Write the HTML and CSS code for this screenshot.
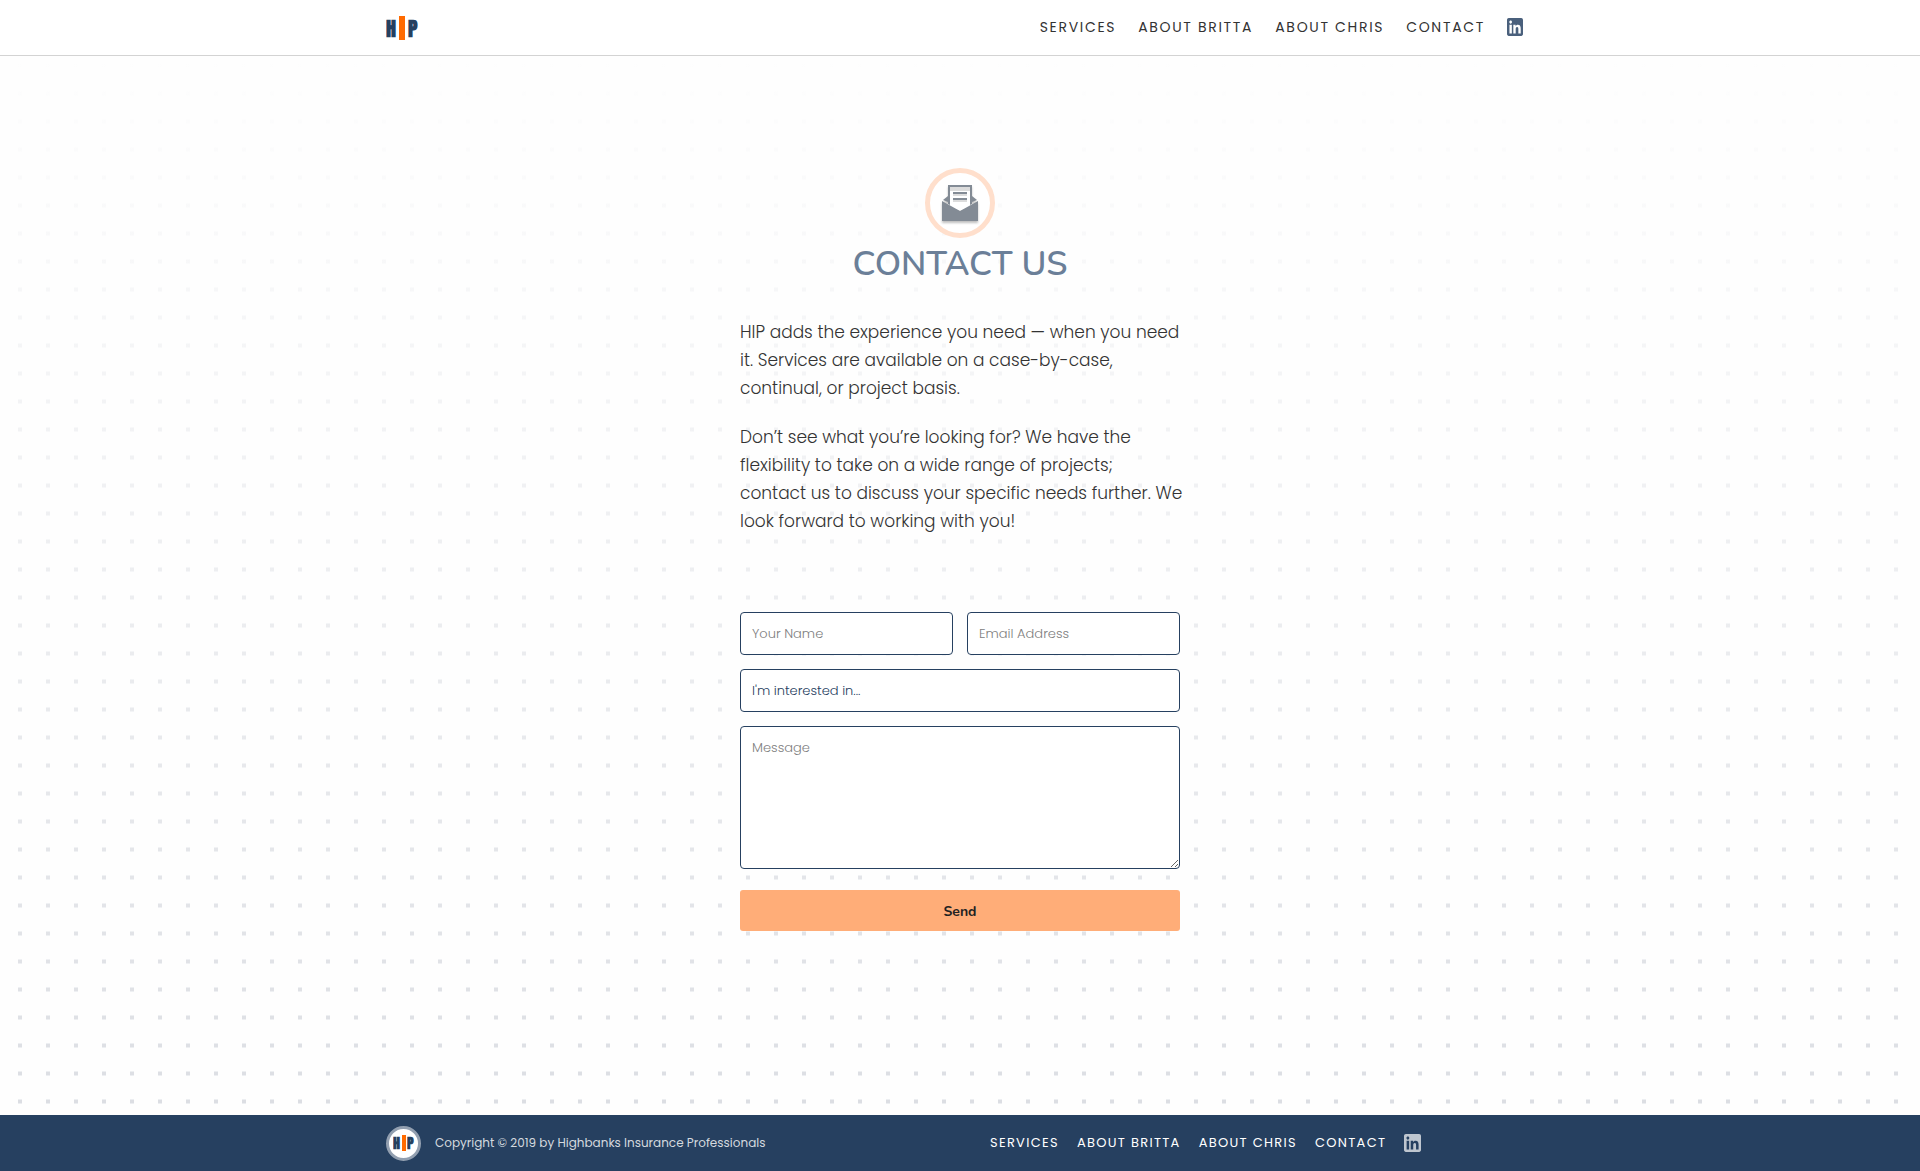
FILE: index.html
```html
<!DOCTYPE html>
<html lang="en">
<head>
<meta charset="utf-8">
<meta name="viewport" content="width=device-width, initial-scale=1">
<title>Contact Us | Highbanks Insurance Professionals</title>
<link rel="stylesheet" href="styles.css">
</head>
<body>
<header class="site-header">
  <div class="container header-inner">
    <a class="logo" href="#" aria-label="Home">
      <svg width="36" height="42" viewBox="0 -8 36 42">
        <text class="logo-letter" x="0" y="22">H</text>
        <rect x="13" y="1" width="6" height="24" fill="#ff6a00"/>
        <text class="logo-letter" x="22" y="22">P</text>
      </svg>
    </a>
    <nav class="nav header-nav">
      <a href="#">Services</a>
      <a href="#">About Britta</a>
      <a href="#">About Chris</a>
      <a href="#">Contact</a>
      <a class="linkedin" href="#" aria-label="LinkedIn">
        <svg width="16" height="18" viewBox="0 32 448 448" preserveAspectRatio="none"><path fill="currentColor" d="M400 32H48C21.500 32 0 53.500 0 80v352c0 26.500 21.500 48 48 48h352c26.500 0 48-21.500 48-48V80c0-26.500-21.500-48-48-48zM135.400 416H69V202.200h66.500V416zm-33.200-243c-21.300 0-38.500-17.300-38.500-38.500S80.900 96 102.200 96c21.200 0 38.500 17.300 38.500 38.500 0 21.300-17.200 38.500-38.500 38.500zm282.100 243h-66.400V312c0-24.800-.5-56.700-34.500-56.700-34.600 0-39.900 27-39.900 54.900V416h-66.400V202.200h63.700v29.200h.9c8.900-16.800 30.600-34.500 62.900-34.500 67.200 0 79.700 44.300 79.700 101.900V416z"/></svg>
      </a>
    </nav>
  </div>
</header>

<main class="main">
  <section class="contact">
    <div class="contact-icon">
      <svg width="36" height="36" viewBox="0 0 36 36" fill="#838b95">
        <path fill="#fff" d="M6 1h24v20l-12 5L6 21z"/>
        <path d="M6 0h24v19l-2 1V2H8v18l-2-1z"/>
        <path d="M6 11v6l-5-2zM30 11v6l5-2z"/>
        <path fill="#dcdcdc" d="M8 2h20v4H8z"/>
        <path d="M11 7h14v2H11zM11 13h14v2H11z"/>
        <path fill="#dcdcdc" d="M11 9h14v2H11zM11 15h14v2H11z"/>
        <path d="M0 16l18 10 18-10v20H0z"/>
      </svg>
    </div>
    <h1 class="title">Contact Us</h1>
    <div class="intro">
      <p>HIP adds the experience you need — when you need it. Services are available on a case-by-case, continual, or project basis.</p>
      <p>Don’t see what you’re looking for? We have the flexibility to take on a wide range of projects;<br> contact us to discuss your specific needs further. We look forward to working with you!</p>
    </div>
    <form class="form">
      <input class="field" type="text" placeholder="Your Name" aria-label="Your Name">
      <input class="field" type="email" placeholder="Email Address" aria-label="Email Address">
      <select class="field wide" aria-label="I'm interested in">
        <option>I'm interested in...</option>
      </select>
      <textarea class="field message wide" placeholder="Message" aria-label="Message"></textarea>
      <button class="send wide" type="submit">Send</button>
    </form>
  </section>
</main>

<footer class="site-footer">
  <div class="container footer-inner">
    <div class="legal">
      <a class="badge" href="#" aria-label="Home">
        <svg width="22" height="28" viewBox="0 -5 22 28">
          <text class="logo-letter small" x="0" y="15">H</text>
          <rect x="9" y="1" width="4" height="16" fill="#ff6a00"/>
          <text class="logo-letter small" x="14" y="15">P</text>
        </svg>
      </a>
      <span>Copyright © 2019 by Highbanks Insurance Professionals</span>
    </div>
    <nav class="nav footer-nav">
      <a href="#">Services</a>
      <a href="#">About Britta</a>
      <a href="#">About Chris</a>
      <a href="#">Contact</a>
      <a class="linkedin" href="#" aria-label="LinkedIn">
        <svg width="17" height="18" viewBox="0 32 448 448" preserveAspectRatio="none"><path fill="currentColor" d="M400 32H48C21.500 32 0 53.500 0 80v352c0 26.500 21.500 48 48 48h352c26.500 0 48-21.500 48-48V80c0-26.500-21.500-48-48-48zM135.400 416H69V202.200h66.500V416zm-33.200-243c-21.300 0-38.500-17.300-38.500-38.500S80.900 96 102.200 96c21.200 0 38.500 17.300 38.500 38.500 0 21.300-17.200 38.500-38.500 38.500zm282.100 243h-66.400V312c0-24.800-.5-56.700-34.500-56.700-34.600 0-39.900 27-39.900 54.900V416h-66.400V202.200h63.700v29.200h.9c8.900-16.800 30.600-34.500 62.900-34.500 67.200 0 79.700 44.300 79.700 101.900V416z"/></svg>
      </a>
    </nav>
  </div>
</footer>
</body>
</html>
```
FILE: styles.css
```css
* {
  box-sizing: border-box;
}

body {
  margin: 0;
  min-height: 100vh;
  display: flex;
  flex-direction: column;
  background: #fefefe;
  color: #333;
  font-family: Poppins, Inter, sans-serif;
  font-size: 17px;
  font-weight: 300;
  line-height: 28px;
}

a {
  color: inherit;
  text-decoration: none;
}

svg {
  display: block;
}

.container {
  width: 100%;
  max-width: 1148px;
  margin: 0 auto;
}

/* Header */
.site-header {
  background: #fff;
  border-bottom: 1px solid #d3d3d3;
}

.header-inner {
  display: flex;
  align-items: center;
  justify-content: space-between;
  height: 55px;
}

.logo-letter {
  font-family: Anton, "Liberation Sans Narrow", "DejaVu Sans Condensed", sans-serif;
  font-size: 20px;
  font-weight: 700;
  fill: #264060;
}

.logo-letter.small {
  font-size: 14px;
}

.nav {
  display: flex;
  align-items: center;
  font-weight: 400;
  text-transform: uppercase;
}

.header-nav {
  gap: 22px;
  padding: 0 11px 2px 0;
  font-size: 14px;
  letter-spacing: 0.12em;
}

.header-nav .linkedin {
  color: #4a607c;
}

/* Dotted page background, fading in from top to bottom */
.main {
  flex: 1;
  padding: 112px 20px 184px;
  background-image:
    linear-gradient(#fefefe, rgba(254, 254, 254, 0)),
    conic-gradient(from 90deg at 24px 25px, #dcdee3 25%, transparent 0),
    conic-gradient(from 90deg at 24px 23px, #eceef1 25%, transparent 0);
  background-size: auto, 28px 28px, 28px 28px;
  background-position: 0 0, 22px 11px, 22px 12px;
}

.contact {
  max-width: 440px;
  margin: 0 auto;
}

.contact-icon {
  display: flex;
  align-items: center;
  justify-content: center;
  width: 70px;
  height: 70px;
  margin: 0 auto;
  border: 5px solid #ffdfcc;
  border-radius: 50%;
  background: #fff;
}

.contact-icon svg {
  filter: drop-shadow(0 2px 1px rgba(0, 0, 0, 0.25));
}

.title {
  margin: 5px 0 33px;
  color: #6b7f98;
  font-family: Nunito, Lato, sans-serif;
  font-size: 34px;
  font-weight: 600;
  line-height: 42px;
  text-align: center;
  text-transform: uppercase;
}

/* The text runs slightly past the form's right edge */
.intro {
  margin-right: -6px;
}

.intro p {
  margin: 0 0 21px;
}

.form {
  display: grid;
  grid-template-columns: 1fr 1fr;
  gap: 14px;
  margin-top: 77px;
}

.wide {
  grid-column: 1 / -1;
}

.field {
  width: 100%;
  height: 43px;
  margin: 0;
  padding: 0 11px;
  appearance: none;
  border: 1px solid #264060;
  border-radius: 4px;
  background: #fff;
  color: #264060;
  font: inherit;
  font-size: 13px;
}

.field::placeholder {
  color: #808080;
}

.message {
  height: 143px;
  padding: 7px 11px;
  resize: vertical;
}

.send {
  height: 41px;
  margin-top: 7px;
  padding: 1px 0 0;
  border: 0;
  border-radius: 3px;
  background: #ffad78;
  color: #222;
  font-family: Nunito, Lato, sans-serif;
  font-size: 14px;
  font-weight: 700;
}

/* Footer */
.site-footer {
  background: #264060;
  color: #d4d9df;
}

.footer-inner {
  display: grid;
  grid-template-columns: 1fr 1fr;
  column-gap: 60px;
  align-items: center;
  height: 56px;
}

.legal {
  display: flex;
  align-items: center;
  gap: 14px;
  font-size: 12px;
  font-weight: 400;
  white-space: nowrap;
}

.badge {
  display: flex;
  align-items: center;
  justify-content: center;
  width: 35px;
  height: 35px;
  border: 3px solid #929fb0;
  border-radius: 50%;
  background: #fff;
}

.footer-nav {
  gap: 18px;
  color: #fff;
  font-size: 13px;
  letter-spacing: 0.1em;
  white-space: nowrap;
}

.footer-nav .linkedin {
  color: #bec6cf;
}

@media (max-width: 1180px) {
  .container {
    padding: 0 20px;
  }

  .header-inner,
  .footer-inner {
    display: flex;
    flex-wrap: wrap;
    height: auto;
    gap: 14px;
    padding: 14px 20px;
  }

  .nav {
    flex-wrap: wrap;
  }

  .intro {
    margin-right: 0;
  }
}
```
